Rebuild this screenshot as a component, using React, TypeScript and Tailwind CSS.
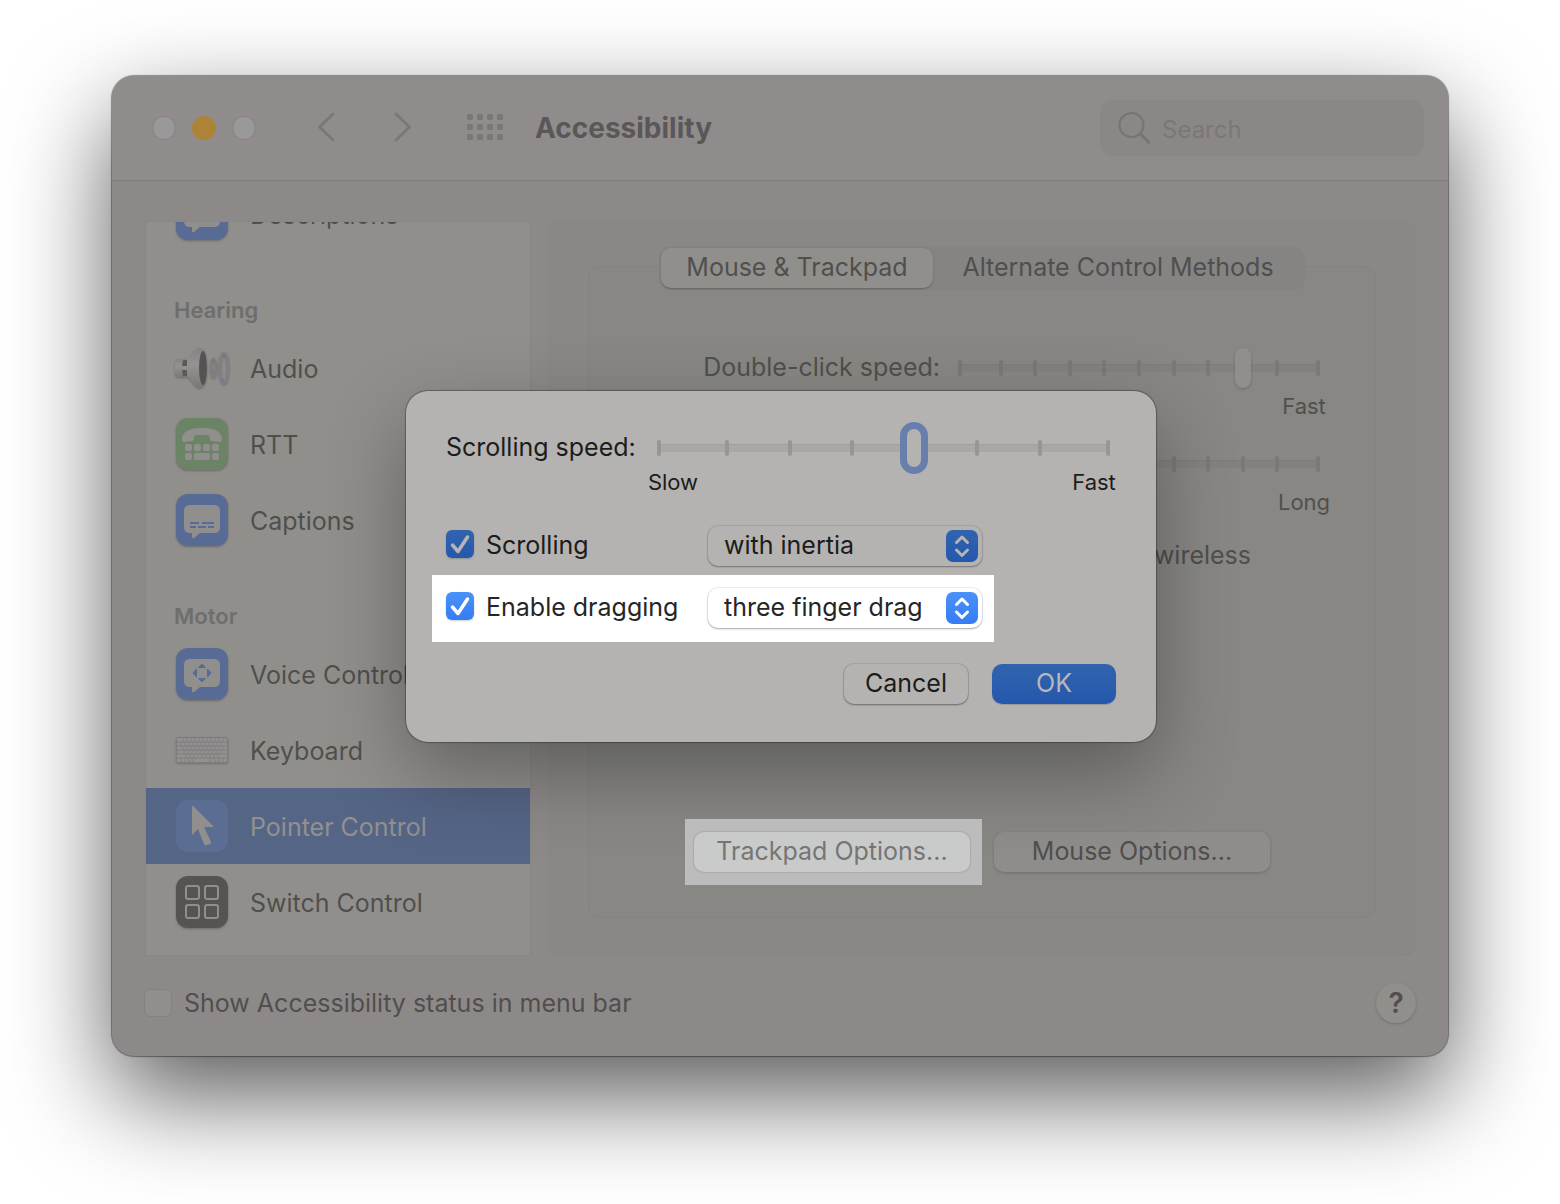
import React from "react";

function Tile({ tone, flat, children }: { tone: string; flat?: boolean; children: React.ReactNode }) {
  return (
    <svg
      viewBox="0 0 52 52"
      className={
        flat
          ? "size-[52px] shrink-0 overflow-visible"
          : "size-[52px] shrink-0 overflow-visible drop-shadow-[0_1px_1px_rgba(0,0,0,0.25)]"
      }
      aria-hidden="true"
    >
      <rect width="52" height="52" rx="12" fill={tone} />
      {children}
    </svg>
  );
}

const BUBBLE = "M14 11h24q6 0 6 6v16q0 6-6 6H24l-6 5q-2 1-2-1v-4h-2q-6 0-6-6V17q0-6 6-6Z";

function DescriptionsIcon() {
  return (
    <Tile tone="#586b95">
      <path d={BUBBLE} fill="#918f8d" />
    </Tile>
  );
}

function CaptionsIcon() {
  return (
    <Tile tone="#586b95">
      <path d={BUBBLE} fill="#918f8d" />
      <path d="M14 29h9M26 29h12M14 33h6M22 33h8M32 33h6" stroke="#586b95" strokeWidth="2" />
    </Tile>
  );
}

function VoiceIcon() {
  return (
    <Tile tone="#586b95">
      <path d={BUBBLE} fill="#918f8d" />
      <path d="M26 16l3.500 3.500h-7zM26 34l3.500-3.500h-7zM17 25l3.500-4v8zM35 25l-3.500-4v8z" fill="#586b95" stroke="#586b95" strokeLinejoin="round" />
    </Tile>
  );
}

function RttIcon() {
  return (
    <Tile tone="#6a8465">
      <path d="M6 22C6 13 14 10 26 10s20 3 20 12q0 2-2 2l-8-1q-2 0-2-2v-1q0-3-3-3H21q-3 0-3 3v1q0 2-2 2l-8 1q-2 0-2-2Z" fill="#918f8d" />
      <g fill="#918f8d">
        <rect x="9" y="26" width="7" height="7" rx="2" />
        <rect x="18" y="26" width="7" height="7" rx="2" />
        <rect x="27" y="26" width="7" height="7" rx="2" />
        <rect x="36" y="26" width="7" height="7" rx="2" />
        <rect x="9" y="35" width="7" height="7" rx="2" />
        <rect x="18" y="35" width="16" height="7" rx="2" />
        <rect x="36" y="35" width="7" height="7" rx="2" />
      </g>
    </Tile>
  );
}

function AudioIcon() {
  return (
    <svg viewBox="0 0 52 52" className="size-[52px] shrink-0 overflow-visible drop-shadow-[0_1px_1px_rgba(0,0,0,0.25)]" aria-hidden="true">
      <defs>
        <linearGradient id="cone" x1="0" y1="0" x2="0" y2="1">
          <stop offset="0" stopColor="#858282" />
          <stop offset="0.4" stopColor="#949292" />
          <stop offset="1" stopColor="#7b7878" />
        </linearGradient>
      </defs>
      <rect x="-1" y="17" width="14" height="18" rx="4" fill="url(#cone)" />
      <path d="M7 18h4v6H6zM6 28h5v6H7z" fill="#5b5a59" />
      <path d="M11 17C16 14 19 6 24 6c4 0 7 8 7 20s-3 20-7 20c-5 0-8-8-13-12Z" fill="url(#cone)" />
      <ellipse cx="27" cy="26" rx="4" ry="17" fill="#545352" />
      <ellipse cx="37.500" cy="26" rx="2.500" ry="9" fill="none" stroke="#807e80" strokeWidth="2" />
      <ellipse cx="48" cy="26" rx="4" ry="15" fill="none" stroke="#828086" strokeWidth="2.500" />
      <path d="M47 13h2M46 37l1 2M37 18h1M37 29h1" stroke="#5d73a0" strokeWidth="1.500" />
    </svg>
  );
}

function KeyboardIcon() {
  return (
    <svg viewBox="0 0 52 52" className="size-[52px] shrink-0 overflow-visible drop-shadow-[0_1px_1px_rgba(0,0,0,0.2)]" aria-hidden="true">
      <rect x="0.500" y="13.500" width="51" height="25" rx="1.500" fill="#929090" stroke="#7d7a7a" />
      <path d="M0 18h52M0 22h52M0 26h52M0 30h52M0 34h52" stroke="#7f7c7c" />
      <path d="M7 14v4M11 14v4M15 14v4M19 14v4M23 14v4M27 14v4M31 14v4M35 14v4M39 14v4M43 14v4M47 14v4M5 18v4M9 18v4M13 18v4M17 18v4M21 18v4M25 18v4M29 18v4M33 18v4M37 18v4M41 18v4M45 18v4M7 22v4M11 22v4M15 22v4M19 22v4M23 22v4M27 22v4M31 22v4M35 22v4M39 22v4M43 22v4M47 22v4M8 26v4M12 26v4M16 26v4M20 26v4M24 26v4M28 26v4M32 26v4M36 26v4M40 26v4M44 26v4M10 30v4M14 30v4M18 30v4M22 30v4M26 30v4M30 30v4M34 30v4M38 30v4M42 30v4M5 34v4M9 34v4M13 34v4M17 34v4M34 34v4M39 34v4M43 34v4M47 34v4" stroke="#838080" />
    </svg>
  );
}

function PointerIcon() {
  return (
    <Tile tone="#5b6d93" flat>
      <path d="M16 7v28l6-6 6 15q1 2 3 1l3-1q1-1 1-2l-7-15h9q1 0 0-1L17 6q-1 0-1 1Z" fill="#918f8d" />
    </Tile>
  );
}

function SwitchIcon() {
  return (
    <Tile tone="#555453">
      <g fill="none" stroke="#918f8d" strokeWidth="2">
        <rect x="10" y="10" width="13" height="13" rx="2" />
        <rect x="29" y="10" width="13" height="13" rx="2" />
        <rect x="10" y="29" width="13" height="13" rx="2" />
        <rect x="29" y="29" width="13" height="13" rx="2" />
      </g>
    </Tile>
  );
}

function SidebarItem({ icon, label, active }: { icon: React.ReactNode; label: string; active?: boolean }) {
  return (
    <li>
      <button
        type="button"
        className={
          active
            ? "flex h-[76px] w-full items-center gap-[22px] bg-[#556586] pl-[30px] text-left text-[#929190]"
            : "flex h-[76px] w-full items-center gap-[22px] pl-[30px] text-left"
        }
      >
        {icon}
        <span className="pt-[3px] whitespace-nowrap">{label}</span>
      </button>
    </li>
  );
}

function SidebarHeading({ children }: { children: React.ReactNode }) {
  return (
    <h2 className="flex h-[78px] shrink-0 items-end pb-1 pl-7 text-[22px] leading-8 font-semibold text-[#6f6e6d]">{children}</h2>
  );
}

function Slider({
  id,
  ticks,
  value,
  low,
  high,
  focused,
}: {
  id: string;
  ticks: number;
  value: number;
  low: string;
  high: string;
  focused?: boolean;
}) {
  return (
    <div>
      <div className="relative flex h-10 items-center">
        <div
          className={
            focused
              ? "h-2 w-full rounded-xs border-t border-[#a09e9e] bg-[#a9a7a7]"
              : "h-2 w-full rounded-xs border-t border-[#7f7c7b] bg-[#838080]"
          }
        />
        <div className="pointer-events-none absolute inset-0 flex items-center justify-between">
          {Array.from({ length: ticks }, (_, i) => (
            <span
              key={i}
              className={
                focused
                  ? "h-4 w-1 rounded-full bg-[#979595] first:mr-1.5 last:ml-1.5"
                  : "h-4 w-1 rounded-full bg-[#7b7878] first:mr-1.5 last:ml-1.5"
              }
            />
          ))}
        </div>
        <input
          id={id}
          type="range"
          min={0}
          max={ticks - 1}
          defaultValue={value}
          className={
            focused
              ? "absolute inset-x-0 -inset-y-1.5 w-full appearance-none bg-transparent outline-none [&::-webkit-slider-thumb]:h-[52px] [&::-webkit-slider-thumb]:w-7 [&::-webkit-slider-thumb]:appearance-none [&::-webkit-slider-thumb]:rounded-full [&::-webkit-slider-thumb]:border-[7px] [&::-webkit-slider-thumb]:border-[#687fae] [&::-webkit-slider-thumb]:bg-[#b4b3b1]"
              : "absolute inset-0 w-full appearance-none bg-transparent outline-none [&::-webkit-slider-thumb]:h-10 [&::-webkit-slider-thumb]:w-4 [&::-webkit-slider-thumb]:appearance-none [&::-webkit-slider-thumb]:rounded-full [&::-webkit-slider-thumb]:bg-[#908f8d] [&::-webkit-slider-thumb]:shadow-[0_1px_3px_rgba(0,0,0,0.2)]"
          }
        />
      </div>
      <div
        className={
          focused
            ? "-mx-4 flex justify-between text-[22px] leading-7"
            : "-mx-4 flex justify-between pt-1 text-[22px] leading-7"
        }
      >
        <span className="w-16 text-center">{low}</span>
        <span className="w-16 text-center">{high}</span>
      </div>
    </div>
  );
}

function CheckRow({ id, label, options, bright }: { id: string; label: string; options: string[]; bright?: boolean }) {
  return (
    <div
      className={
        bright
          ? "-ml-3.5 mt-[9px] flex w-[562px] items-center bg-white pt-[13px] pr-3 pb-3.5 pl-3.5 text-[#262626]"
          : "mt-[30px] flex w-[536px] items-center"
      }
    >
      <label htmlFor={id} className="flex flex-1 items-center gap-3 whitespace-nowrap">
        <span className="relative -mt-1 size-7">
          <input
            id={id}
            type="checkbox"
            defaultChecked
            className={
              bright
                ? "block size-7 appearance-none rounded-md bg-linear-to-b from-[#4a92f8] to-[#357cf6] shadow-[0_1px_2px_rgba(0,0,0,0.2)]"
                : "block size-7 appearance-none rounded-md bg-linear-to-b from-[#3164ae] to-[#2557ad] shadow-[0_1px_2px_rgba(0,0,0,0.2)]"
            }
          />
          <svg viewBox="0 0 28 28" className="pointer-events-none absolute inset-0" aria-hidden="true">
            <path d="M6.500 15l5.500 6.500L21.500 7" fill="none" stroke={bright ? "#fff" : "#b6b5b3"} strokeWidth="3.500" strokeLinecap="round" strokeLinejoin="round" />
          </svg>
        </span>
        {label}
      </label>
      <span className="relative">
        <select
          aria-label={label + " mode"}
          className={
            bright
              ? "block h-10 w-[274px] appearance-none rounded-[10px] bg-white pr-10 pl-4 shadow-[0_0_0_1px_rgba(0,0,0,0.06),0_1px_2px_rgba(0,0,0,0.3)]"
              : "block h-10 w-[274px] appearance-none rounded-[10px] bg-[#b4b3b1] pr-10 pl-4 shadow-[0_0_0_1px_rgba(0,0,0,0.08),0_1px_2px_rgba(0,0,0,0.3)]"
          }
        >
          {options.map((o) => (
            <option key={o}>{o}</option>
          ))}
        </select>
        <span
          className={
            bright
              ? "pointer-events-none absolute top-1 right-1 size-8 rounded-[7px] bg-linear-to-b from-[#4a92f8] to-[#357cf6]"
              : "pointer-events-none absolute top-1 right-1 size-8 rounded-[7px] bg-linear-to-b from-[#3164ae] to-[#2557ad]"
          }
        >
          <svg viewBox="0 0 32 32" aria-hidden="true">
            <path d="M10.500 12.500L16 7l5.500 5.500M10.500 20L16 25.500 21.500 20" fill="none" stroke={bright ? "#fff" : "#b6b5b3"} strokeWidth="3" strokeLinecap="round" strokeLinejoin="round" />
          </svg>
        </span>
      </span>
    </div>
  );
}

function TitleBar() {
  return (
    <header className="flex h-[105px] items-center rounded-t-[22px] border-b border-[#7f7c7d] bg-[#918c8c] pr-6 pl-10">
      <div className="flex gap-4">
        <button type="button" aria-label="Close" className="size-6 rounded-full border border-[#858283] bg-[#9a9999]" />
        <button type="button" aria-label="Minimize" className="size-6 rounded-full bg-[#ad8337]" />
        <button type="button" aria-label="Zoom" className="size-6 rounded-full border border-[#858283] bg-[#9a9999]" />
      </div>
      <button type="button" aria-label="Back" className="ml-[61px] pb-0.5">
        <svg viewBox="0 0 18 30" className="h-[30px] w-[18px]" fill="none" stroke="#7a7777" strokeWidth="2.800" strokeLinecap="round" strokeLinejoin="round">
          <path d="M16 2L2.500 15 16 28" />
        </svg>
      </button>
      <button type="button" aria-label="Forward" className="ml-[59px] pb-0.5">
        <svg viewBox="0 0 18 30" className="h-[30px] w-[18px]" fill="none" stroke="#7a7777" strokeWidth="2.800" strokeLinecap="round" strokeLinejoin="round">
          <path d="M2 2l13.500 13L2 28" />
        </svg>
      </button>
      <button type="button" aria-label="Show All" className="ml-[55px] pb-0.5">
        <svg viewBox="0 0 36 26" className="h-[26px] w-9" fill="#7a7777">
          {[0, 10, 20].map((y) =>
            [0, 10, 20, 30].map((x) => <rect key={x + "-" + y} x={x} y={y} width="6" height="6" rx="1.500" />),
          )}
        </svg>
      </button>
      <h1 className="ml-8 text-[28px] leading-9 font-bold text-[#595757]">Accessibility</h1>
      <label className="ml-auto flex h-14 w-[324px] items-center gap-2.5 rounded-xl bg-[#8c8787] pl-[18px]">
        <svg viewBox="0 0 34 34" className="size-[34px] shrink-0" fill="none" stroke="#777474" strokeLinecap="round" aria-hidden="true">
          <circle cx="13.500" cy="14" r="12" strokeWidth="2.200" />
          <path d="M22.500 23l8.500 8.500" strokeWidth="3" />
        </svg>
        <input type="search" placeholder="Search" aria-label="Search" className="w-full min-w-0 bg-transparent pt-1 text-[24px] outline-none placeholder:text-[#7a7777]" />
      </label>
    </header>
  );
}

function Sidebar() {
  return (
    <nav className="flex h-[735px] w-[386px] shrink-0 flex-col justify-end overflow-hidden border border-[#888585] bg-[#908f8c] pb-[15px]">
      <ul>
        <SidebarItem icon={<DescriptionsIcon />} label="Descriptions" />
      </ul>
      <SidebarHeading>Hearing</SidebarHeading>
      <ul>
        <SidebarItem icon={<AudioIcon />} label="Audio" />
        <SidebarItem icon={<RttIcon />} label="RTT" />
        <SidebarItem icon={<CaptionsIcon />} label="Captions" />
      </ul>
      <SidebarHeading>Motor</SidebarHeading>
      <ul>
        <SidebarItem icon={<VoiceIcon />} label="Voice Control" />
        <SidebarItem icon={<KeyboardIcon />} label="Keyboard" />
        <SidebarItem icon={<PointerIcon />} label="Pointer Control" active />
        <SidebarItem icon={<SwitchIcon />} label="Switch Control" />
      </ul>
    </nav>
  );
}

function PointerPanel() {
  return (
    <section className="flex flex-1 flex-col rounded-xl border border-[#888585] bg-[#8c8787] px-[39px] pt-6 pb-[37px]">
      <div className="z-10 flex h-11 self-center rounded-xl bg-[#868383] p-0.5">
        <button type="button" className="w-[272px] rounded-[10px] bg-[#908f8c] shadow-[0_1px_2px_rgba(0,0,0,0.25)]">
          Mouse &amp; Trackpad
        </button>
        <button type="button" className="w-[370px]">
          Alternate Control Methods
        </button>
      </div>
      <div className="-mt-6 flex flex-1 flex-col rounded-xl border border-[#858281] bg-[#888784] pt-[81px] pb-8">
        <div className="grid grid-cols-[1fr_362px] items-start gap-x-[18px] gap-y-6 pr-[55px]">
          <label htmlFor="double-click" className="text-right leading-[38px]">
            Double-click speed:
          </label>
          <Slider id="double-click" ticks={11} value={8} low="Slow" high="Fast" />
          <label htmlFor="spring" className="text-right leading-[38px]">
            Spring-loading delay:
          </label>
          <Slider id="spring" ticks={11} value={5} low="Short" high="Long" />
        </div>
        <p className="mt-[23px] pr-[124px] text-right leading-8">Ignore built-in trackpad when mouse or wireless</p>
        <div className="mt-auto flex items-center pl-24">
          <div className="relative z-30 bg-[#bcbcbc] py-[13px] pr-3 pl-[9px]">
            <button type="button" className="h-10 w-[276px] rounded-[10px] bg-[#c9cbca] text-[#777574] shadow-[0_0_2px_rgba(0,0,0,0.3)]">
              Trackpad Options...
            </button>
          </div>
          <button type="button" className="ml-3 h-10 w-[276px] rounded-[10px] bg-[#8f8d8b] shadow-[0_1px_3px_rgba(0,0,0,0.2)]">
            Mouse Options...
          </button>
        </div>
      </div>
    </section>
  );
}

function OptionsDialog() {
  return (
    <div className="pointer-events-none absolute inset-0 z-20 flex items-start justify-center pt-[315px] pl-0.5">
      <div
        role="dialog"
        aria-label="Trackpad options"
        className="pointer-events-auto w-[750px] rounded-[22px] bg-[#b4b3b1] px-10 pt-[37px] pb-[38px] text-[#1c1c1b] shadow-[0_0_1px_1px_rgba(0,0,0,0.3),0_30px_80px_rgba(0,0,0,0.32)]"
      >
        <div className="grid grid-cols-[1fr_453px] items-start pr-1.5">
          <label htmlFor="scroll-speed" className="leading-[38px]">
            Scrolling speed:
          </label>
          <Slider id="scroll-speed" ticks={8} value={4} low="Slow" high="Fast" focused />
        </div>
        <CheckRow id="scrolling" label="Scrolling" options={["with inertia", "without inertia"]} />
        <CheckRow id="dragging" label="Enable dragging" options={["three finger drag", "without drag lock", "with drag lock"]} bright />
        <div className="mt-[22px] flex justify-end gap-6">
          <button type="button" className="h-10 w-[124px] rounded-[10px] bg-[#b4b3b1] shadow-[0_0_0_1px_rgba(0,0,0,0.08),0_1px_2px_rgba(0,0,0,0.35)]">
            Cancel
          </button>
          <button type="button" className="h-10 w-[124px] rounded-[10px] bg-linear-to-b from-[#3164ae] to-[#2557ad] text-[#b9b8b8] shadow-[0_1px_1px_rgba(0,0,0,0.15)]">
            OK
          </button>
        </div>
      </div>
    </div>
  );
}

export default function App() {
  return (
    <div className="min-h-screen overflow-hidden bg-white px-28 pt-19 pb-[148px] font-['Inter',sans-serif] text-[25px] text-[#504f4d]">
      <div className="relative isolate rounded-[22px] bg-[#8e8989] shadow-[0_0_1px_1px_rgba(0,0,0,0.4),0_40px_100px_rgba(0,0,0,0.65)]">
        <TitleBar />
        <main className="flex gap-[17px] pt-10 pr-8 pl-[33px]">
          <Sidebar />
          <PointerPanel />
        </main>
        <footer className="flex items-center justify-between pt-[27px] pr-8 pb-[33px] pl-8">
          <label className="flex items-center gap-3">
            <input type="checkbox" className="size-7 appearance-none rounded-md border border-[#858182] bg-[#908f8c]" />
            <span className="pt-0.5">Show Accessibility status in menu bar</span>
          </label>
          <button type="button" aria-label="Help" className="size-10 rounded-full bg-[#908f8c] text-[28px] leading-10 font-semibold shadow-[0_1px_3px_rgba(0,0,0,0.2)]">
            ?
          </button>
        </footer>
        <OptionsDialog />
      </div>
    </div>
  );
}
